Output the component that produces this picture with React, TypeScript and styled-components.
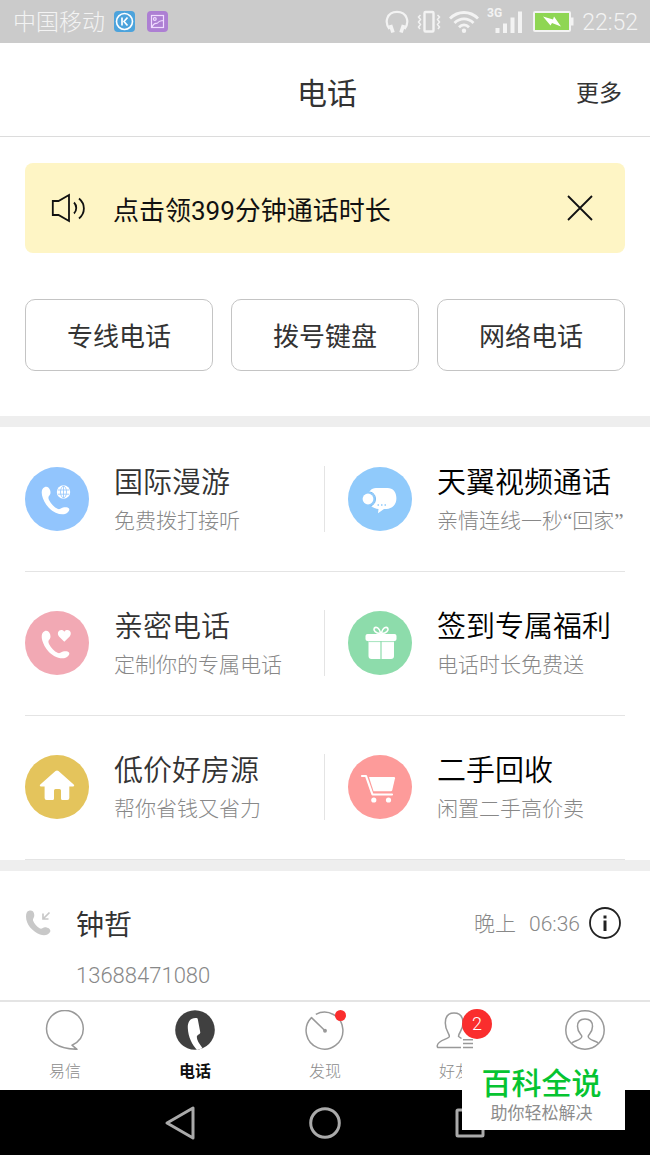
import React from "react";
import styled, { createGlobalStyle } from "styled-components";

const GlobalStyle = createGlobalStyle`
  *, *::before, *::after { box-sizing: border-box; }
  body {
    margin: 0;
    background: #fff;
    color: #333;
    font-family: Roboto, "Noto Sans CJK SC", sans-serif;
  }
  button {
    margin: 0;
    padding: 0;
    border: 0;
    background: none;
    color: inherit;
    font: inherit;
    cursor: pointer;
  }
  svg { display: block; flex: none; }
  h1, h2, p { margin: 0; font-weight: 400; }
`;

const Screen = styled.div`
  position: relative;
  display: flex;
  flex-direction: column;
  min-height: 100vh;
`;

const StatusBar = styled.div`
  display: flex;
  align-items: center;
  height: 43px;
  padding: 0 12px 0 13px;
  background: #cbcbcb;
  color: #f3f3f3;
`;

const Carrier = styled.span`
  margin-right: 9px;
  padding-top: 2px;
  font-size: 23px;
  font-weight: 300;
  line-height: 32px;
`;

const AppBadges = styled.div`
  display: flex;
  gap: 12px;
  margin-right: auto;
`;

const StatusIcons = styled.div`
  display: flex;
  align-items: center;
  gap: 8px;
`;

const Clock = styled.time`
  padding-top: 2px;
  font-size: 23px;
  font-weight: 300;
  line-height: 32px;
`;

const Header = styled.header`
  display: grid;
  grid-template-columns: 1fr auto 1fr;
  align-items: center;
  height: 94px;
  padding: 8px 28px 0 32px;
  border-bottom: 1px solid #dcdcdc;
`;

const Title = styled.h1`
  grid-column: 2;
  font-size: 30px;
  line-height: 40px;
`;

const MoreButton = styled.button`
  justify-self: end;
  font-size: 23px;
  line-height: 40px;
`;

const Banner = styled.section`
  display: flex;
  align-items: center;
  height: 90px;
  margin: 26px 25px 0;
  padding: 0 31px 0 26px;
  border-radius: 8px;
  background: #fef5c5;
  color: #111;
`;

const BannerText = styled.p`
  flex: 1;
  margin-left: 26px;
  padding-top: 5px;
  font-size: 26px;
  line-height: 40px;
`;

const Actions = styled.div`
  display: grid;
  grid-template-columns: repeat(3, 1fr);
  gap: 18px;
  margin: 46px 25px 45px;
`;

const ActionButton = styled.button`
  height: 72px;
  padding-top: 4px;
  border: 1px solid #c4c4c4;
  border-radius: 10px;
  font-size: 26px;
  line-height: 36px;
`;

const Separator = styled.div`
  height: 11px;
  background: #eeeeee;
`;

const Services = styled.section`
  display: grid;
  grid-template-columns: 1fr 1fr;
  margin: 1px 25px 0;
`;

const Service = styled.button<{ $strong?: boolean }>`
  display: flex;
  align-items: center;
  gap: 25px;
  height: 144px;
  padding-bottom: 2px;
  border-bottom: 1px solid #e4e4e4;
  text-align: left;
  white-space: nowrap;
  color: ${(p) => (p.$strong ? "#000" : "#333")};

  &:nth-child(even) { padding-left: 23px; }

  &:nth-child(odd)::after {
    content: "";
    width: 1px;
    height: 66px;
    margin-left: auto;
    background: #e4e4e4;
  }
`;

const ServiceText = styled.span`
  display: block;
  padding-top: 5px;
`;

const ServiceName = styled.span`
  display: block;
  font-size: 29px;
  font-weight: 350;
  line-height: 40px;
`;

const ServiceNote = styled.span`
  display: block;
  font-family: "Liberation Serif", "Noto Sans CJK SC", sans-serif;
  font-size: 21px;
  font-weight: 300;
  line-height: 36px;
  color: #888;
`;

const Calls = styled.section`
  flex: 1;
  padding: 30px 29px 2px 25px;
`;

const CallRow = styled.div`
  display: grid;
  grid-template-columns: 51px 1fr auto 32px;
  align-items: center;
`;

const Caller = styled.h2`
  padding-top: 6px;
  font-size: 28px;
  line-height: 38px;
`;

const CallTime = styled.time`
  display: flex;
  gap: 13px;
  margin-right: 9px;
  padding-top: 2px;
  font-size: 21px;
  font-weight: 300;
  line-height: 38px;
  color: #888;
`;

const CallNumber = styled.p`
  grid-column: 2;
  margin-top: 13px;
  font-size: 22px;
  font-weight: 300;
  line-height: 36px;
  color: #888;
`;

const TabBar = styled.nav`
  display: grid;
  grid-template-columns: repeat(5, 1fr);
  height: 90px;
  border-top: 2px solid #e4e4e4;
`;

const Tab = styled.button<{ $active?: boolean }>`
  display: flex;
  flex-direction: column;
  align-items: center;
  padding-top: 8px;
  font-size: 16px;
  font-weight: ${(p) => (p.$active ? 700 : 300)};
  line-height: 24px;
  color: ${(p) => (p.$active ? "#111" : "#8c8c8c")};
`;

const TabIcon = styled.span`
  position: relative;
  margin-bottom: 10px;
`;

const Dot = styled.i`
  position: absolute;
  top: 0;
  right: -1px;
  width: 11px;
  height: 11px;
  border-radius: 50%;
  background: #fa2d2d;
`;

const Count = styled.span`
  position: absolute;
  top: -1px;
  right: -17px;
  width: 30px;
  height: 30px;
  border-radius: 50%;
  background: #fa2d2d;
  color: #fff;
  font-size: 18px;
  line-height: 30px;
  text-align: center;
`;

const SystemNav = styled.nav`
  display: grid;
  grid-template-columns: repeat(3, 1fr);
  height: 65px;
  padding: 0 108px;
  background: #000;
`;

const SystemButton = styled.button`
  display: grid;
  place-items: center;
`;

const Watermark = styled.aside`
  position: absolute;
  right: 25px;
  bottom: 25px;
  width: 163px;
  height: 70px;
  padding: 5px 4px 0 0;
  background: #fff;
  text-align: center;
`;

const WatermarkName = styled.p`
  font-size: 30px;
  font-weight: 500;
  line-height: 38px;
  color: #06c431;
`;

const WatermarkNote = styled.p`
  font-size: 17px;
  line-height: 20px;
  color: #8c8c8c;
`;

const HANDSET =
  "M19.5 20.2C22 19 24.3 20.5 25.2 23.5C25.8 25.8 25.5 27.6 24.2 28.8C23.2 29.8 23.2 31 24 33C26 37 29 40.2 33 42C34.8 42.6 36 41 38 40.5C41 39.9 43 40.4 44 41.5C45.2 43 43 46.2 40 47C35 48.4 26.5 45.5 21.3 37.8C16.2 30 15 22.4 19.5 20.2Z";

type ServiceKind = "roam" | "video" | "love" | "gift" | "house" | "cart";

const glyphs: Record<ServiceKind, { color: string; art: React.ReactNode }> = {
  roam: {
    color: "#92c5fd",
    art: (
      <>
        <path d={HANDSET} />
        <circle cx="38.5" cy="25" r="6.7" />
        <g fill="none" stroke="#92c5fd" strokeWidth="0.8">
          <ellipse cx="38.5" cy="25" rx="3" ry="5.8" />
          <path d="M38.5 19V31M33 23H44M33 27.2H44" />
        </g>
      </>
    ),
  },
  video: {
    color: "#90cafb",
    art: (
      <>
        <path d="M28 21H39.5C45 21 48.4 25 48.4 31.2C48.4 38 44 41.5 38.5 42H36L30 46.2L30.5 42C25 41.5 20 38 20 31.5C20 25 23 21 28 21Z" />
        <circle cx="20" cy="32" r="7.4" fill="#90cafb" />
        <path d="M22.5 25A7.4 7.4 0 0 1 22.5 39" fill="none" stroke="#7dbdf3" strokeWidth="1" />
        <circle cx="20" cy="32" r="5.4" />
        <path d="M29.5 38h1.5M33 38h1.5M36.5 38h1.5" stroke="#90cafb" strokeWidth="1.4" />
      </>
    ),
  },
  love: {
    color: "#f2a9b4",
    art: (
      <>
        <path d={HANDSET} />
        <path d="M39.3 30.8L34 25.5C30.8 21.5 35.5 16.5 39.3 20.7C43.2 16.5 48 21.5 44.7 25.5Z" />
      </>
    ),
  },
  gift: {
    color: "#8ddcab",
    art: (
      <>
        <rect x="17.5" y="23" width="31" height="7" rx="2" />
        <path d="M20.5 30H32.4V48H23.5Q20.5 48 20.5 45ZM33.6 30H46V45Q46 48 43 48H33.6Z" />
        <path d="M20.5 30.6H46" stroke="#8ddcab" strokeWidth="0.8" />
        <path d="M32 22.5C28 22 25 19.5 26.2 17.3C28 15 31.5 17 32.6 22ZM34 22.5C38 22 41 19.5 39.8 17.3C38 15 34.5 17 33.4 22Z" fill="none" stroke="#fff" strokeWidth="1.6" />
      </>
    ),
  },
  house: {
    color: "#e4c45c",
    art: (
      <path
        d="M30.5 16Q32 14.8 33.5 16L48.7 29.5Q50 31.2 48 31.5H44.3V43Q44.3 45 42.3 45H37.5Q36 45 36 43.5V35.5Q36 34 34.5 34H30.5Q29 34 29 35.5V43.5Q29 45 27.5 45H21.6Q19.6 45 19.6 43V31.5H16Q14 31.2 15.3 29.5Z"
      />
    ),
  },
  cart: {
    color: "#fd9b9a",
    art: (
      <>
        <path d="M14 21H18L24.5 39.5H44" fill="none" stroke="#fff" strokeWidth="2.2" strokeLinecap="round" strokeLinejoin="round" />
        <path d="M21 22H46Q47.2 22 47 23.2L44.3 35Q44 36.3 42.8 36.3H25.5Z" />
        <circle cx="25.8" cy="45" r="2.6" />
        <circle cx="40.5" cy="45" r="2.6" />
      </>
    ),
  },
};

const ServiceIcon = ({ kind }: { kind: ServiceKind }) => (
  <svg width="64" height="64" viewBox="0 0 64 64" fill="#fff" aria-hidden="true">
    <circle cx="32" cy="32" r="32" fill={glyphs[kind].color} />
    {glyphs[kind].art}
  </svg>
);

const services: { kind: ServiceKind; name: string; note: string; strong?: boolean }[] = [
  { kind: "roam", name: "国际漫游", note: "免费拨打接听" },
  { kind: "video", name: "天翼视频通话", note: "亲情连线一秒“回家”", strong: true },
  { kind: "love", name: "亲密电话", note: "定制你的专属电话" },
  { kind: "gift", name: "签到专属福利", note: "电话时长免费送", strong: true },
  { kind: "house", name: "低价好房源", note: "帮你省钱又省力" },
  { kind: "cart", name: "二手回收", note: "闲置二手高价卖", strong: true },
];

const TabSvg = ({ children }: { children: React.ReactNode }) => (
  <svg width="40" height="40" viewBox="0 0 40 40" fill="none" stroke="#999" strokeWidth="1.5" strokeLinejoin="round" aria-hidden="true">
    {children}
  </svg>
);

const tabs: { name: string; label?: string; active?: boolean; icon: React.ReactNode; extra?: React.ReactNode }[] = [
  {
    name: "messages",
    label: "易信",
    icon: (
      <TabSvg>
        <path d="M27 35.2C34 32 38.3 26 38.3 18.8A18.4 18.4 0 0 0 1.5 18.8C1.5 31.5 13 38.8 32 39.3Z" />
      </TabSvg>
    ),
  },
  {
    name: "phone",
    label: "电话",
    active: true,
    icon: (
      <TabSvg>
        <circle cx="20" cy="20" r="19.8" fill="#404040" stroke="none" />
        <path d="M21.5 8C15.5 7.5 12.5 11.5 12.8 18C13.2 27 17 34.5 22 40L27.6 38.2C24 33.5 21.8 30 21.8 26.8C22 25 25.2 24.2 25.3 22.5L22.8 9.2Q22.6 8.1 21.5 8Z" fill="#fff" stroke="none" />
      </TabSvg>
    ),
  },
  {
    name: "discover",
    label: "发现",
    icon: (
      <TabSvg>
        <path d="M10.8 4.4A18.4 18.4 0 1 1 6.5 7.6L19.5 20.3" />
        <circle cx="20" cy="20.8" r="1.2" fill="#999" />
      </TabSvg>
    ),
    extra: <Dot />,
  },
  {
    name: "friends",
    label: "好友",
    icon: (
      <TabSvg>
        <path d="M26 37.5H3.5Q2 37.5 2.3 35.5C3 30 12.5 29.5 14.2 26.8C15.2 24 10.3 21.5 10.3 13C10.3 6.5 13.5 3 19 3C24.5 3 28 6.5 28 13C28 21 23 23 23.6 26.5L26.5 28.5" />
        <path d="M28 29.8H38M28 33.5H38M28 37.5H38" />
      </TabSvg>
    ),
    extra: <Count>2</Count>,
  },
  {
    name: "me",
    icon: (
      <TabSvg>
        <circle cx="20" cy="20" r="19.2" />
        <path d="M6.5 33.5C8 30.5 16.5 30.5 16.8 26.5C17 24.5 12.5 23 12.5 16.5C12.5 11.5 15.5 9 20 9C24.5 9 27.5 11.5 27.5 16.5C27.5 23 23 24.5 23.2 26.5C23.5 30.5 32 30.5 33.5 33.5" />
      </TabSvg>
    ),
  },
];

export default function App() {
  return (
    <>
      <GlobalStyle />
      <Screen>
        <StatusBar>
          <Carrier>中国移动</Carrier>
          <AppBadges>
            <svg width="21" height="21" viewBox="0 0 21 21" fill="none" stroke="#fff">
              <rect width="21" height="21" rx="4" fill="#4ca3dc" stroke="none" />
              <circle cx="10.5" cy="10.5" r="8" strokeWidth="1.6" />
              <path d="M8 6.5V14.5M13.5 6.5L10 10.5L13.5 14.5" strokeWidth="1.7" />
            </svg>
            <svg width="21" height="21" viewBox="0 0 21 21" fill="none" stroke="#f0dcff" strokeWidth="1.2">
              <rect width="21" height="21" rx="4" fill="#ad7fd3" stroke="none" />
              <rect x="4.5" y="4.5" width="12" height="12" />
              <circle cx="7.8" cy="8" r="1.4" />
              <path d="M5 16C8 10 9 14 11 11.5C12.5 9.5 14 10 16 9.5" />
            </svg>
          </AppBadges>
          <StatusIcons>
            <svg width="24" height="24" viewBox="0 0 24 24" fill="none" stroke="#f3f3f3" strokeWidth="2.2">
              <path d="M4.5 19C-1 12 2 1.8 12 1.8S25 12 19.5 19" />
              <path d="M5.5 15L8 22.5M18.5 15L16 22.5" strokeWidth="3.6" />
            </svg>
            <svg width="24" height="24" viewBox="0 0 24 24" fill="none" stroke="#f3f3f3" strokeWidth="2">
              <rect x="7.5" y="2" width="9" height="19.5" rx="1" strokeWidth="2.4" />
              <path d="M3.5 5L1.5 7L3.5 9.5L1.5 12L3.5 14.5L1.5 17L3 19M20.5 5L22.5 7L20.5 9.5L22.5 12L20.5 14.5L22.5 17L21 19" strokeWidth="1.5" />
            </svg>
            <svg width="30" height="24" viewBox="0 0 30 24" fill="none" stroke="#f3f3f3" strokeWidth="2.8">
              <path d="M1 8.5C9 0.5 21 0.5 29 8.5M5.5 13C11 7.5 19 7.5 24.5 13M10 17.2C13 14.2 17 14.2 20 17.2" />
              <circle cx="15" cy="20.8" r="2.2" fill="#f3f3f3" stroke="none" />
            </svg>
            <svg width="38" height="30" viewBox="0 0 38 30" fill="#f3f3f3">
              <text x="0" y="10" fontSize="12" fontWeight="700" fontFamily="Roboto, sans-serif">3G</text>
              <path d="M8.5 21h4v5h-4zM16 16.5h4v9.5h-4zM23.5 10.5h4v15.5h-4zM31 4.500h4v21.500h-4z" />
            </svg>
            <svg width="41" height="21" viewBox="0 0 41 21">
              <rect x="1" y="1" width="36" height="19" rx="1" fill="#8fd653" stroke="#f3f3f3" strokeWidth="2" />
              <path d="M38 6.5h2.5v8H38z" fill="#f3f3f3" />
              <path d="M10 5.5L20 8.5L21 5.5L28 15.5L19 12L17.5 14.5Z" fill="#fff" />
            </svg>
            <Clock>22:52</Clock>
          </StatusIcons>
        </StatusBar>

        <Header>
          <Title>电话</Title>
          <MoreButton>更多</MoreButton>
        </Header>

        <Banner>
          <svg width="36" height="30" viewBox="0 0 36 30" fill="none" stroke="#111" strokeWidth="1.8" aria-hidden="true">
            <path d="M1.8 8H7.5L18 2V28L7.5 22H1.8Z" />
            <path d="M23 9.5C26 12.5 26 17.5 23 20.5M28 5.5C34.5 11 34.5 20 28 25.5" />
          </svg>
          <BannerText>点击领399分钟通话时长</BannerText>
          <button aria-label="关闭">
            <svg width="28" height="28" viewBox="0 0 28 28" fill="none" stroke="#111" strokeWidth="1.8">
              <path d="M2 2L26 26M26 2L2 26" />
            </svg>
          </button>
        </Banner>

        <Actions>
          <ActionButton>专线电话</ActionButton>
          <ActionButton>拨号键盘</ActionButton>
          <ActionButton>网络电话</ActionButton>
        </Actions>

        <Separator />

        <Services>
          {services.map((s) => (
            <Service key={s.kind} $strong={s.strong}>
              <ServiceIcon kind={s.kind} />
              <ServiceText>
                <ServiceName>{s.name}</ServiceName>
                <ServiceNote>{s.note}</ServiceNote>
              </ServiceText>
            </Service>
          ))}
        </Services>

        <Separator />

        <Calls>
          <CallRow>
            <svg width="26" height="26" viewBox="0 0 26 26" fill="#c8c8c8" aria-hidden="true">
              <path d="M4 .8C7 0 9 1.5 9.3 5C9.5 7.5 7.5 8.5 8 10.5C9 13.5 12 17 15 18.5C17 19.2 18 17.3 20 17.3C23 17.3 26 19.5 25.3 21.5C24 25 19.5 26 15 24.5C7.5 21.5 1 14.5 1 6.5C1 3 2 1.3 4 .8Z" />
              <path d="M24.5 2.5L18.5 8.5M18 3.5V9H23.5" fill="none" stroke="#c8c8c8" strokeWidth="1.7" />
            </svg>
            <Caller>钟哲</Caller>
            <CallTime>
              <span>晚上</span>
              <span>06:36</span>
            </CallTime>
            <button aria-label="通话详情">
              <svg width="32" height="32" viewBox="0 0 32 32" fill="none" stroke="#222">
                <circle cx="16" cy="16" r="15" strokeWidth="1.8" />
                <path d="M16 8.5V11.5M16 13.5V24" strokeWidth="3" />
              </svg>
            </button>
            <CallNumber>13688471080</CallNumber>
          </CallRow>
        </Calls>

        <TabBar>
          {tabs.map((t) => (
            <Tab key={t.name} $active={t.active} aria-label={t.label ?? "我"}>
              <TabIcon>
                {t.icon}
                {t.extra}
              </TabIcon>
              {t.label}
            </Tab>
          ))}
        </TabBar>

        <SystemNav>
          <SystemButton aria-label="返回">
            <svg width="32" height="36" viewBox="0 0 32 36" fill="none" stroke="#aaa" strokeWidth="3" strokeLinejoin="round">
              <path d="M29 3V33L3 18Z" />
            </svg>
          </SystemButton>
          <SystemButton aria-label="主屏幕">
            <svg width="32" height="32" viewBox="0 0 32 32" fill="none" stroke="#aaa" strokeWidth="3">
              <circle cx="16" cy="16" r="14.3" />
            </svg>
          </SystemButton>
          <SystemButton aria-label="最近任务">
            <svg width="30" height="30" viewBox="0 0 30 30" fill="none" stroke="#aaa" strokeWidth="3">
              <rect x="2" y="2" width="26" height="26" rx="1" />
            </svg>
          </SystemButton>
        </SystemNav>

        <Watermark>
          <WatermarkName>百科全说</WatermarkName>
          <WatermarkNote>助你轻松解决</WatermarkNote>
        </Watermark>
      </Screen>
    </>
  );
}
